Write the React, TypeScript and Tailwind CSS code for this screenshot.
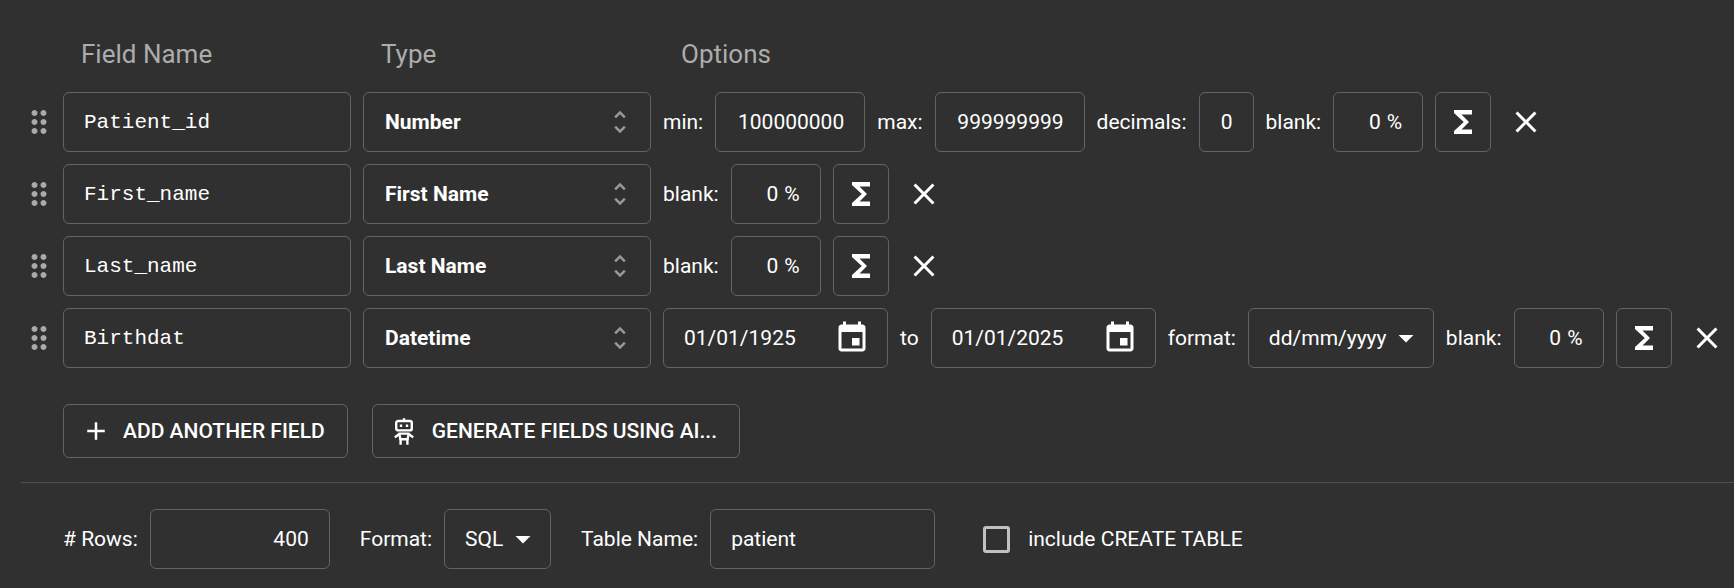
import { useId, useState } from 'react';
import type { ReactNode } from 'react';

const BOX = 'h-15 shrink-0 rounded-md border border-[#636363]';

function Icon({ d, className }: { d: string; className: string }) {
  return (
    <svg viewBox="0 0 24 24" fill="currentColor" aria-hidden="true" className={className}>
      <path d={d} />
    </svg>
  );
}

const PATHS = {
  drag: 'M11 18c0 1.1-.9 2-2 2s-2-.9-2-2 .9-2 2-2 2 .9 2 2m-2-8c-1.1 0-2 .9-2 2s.9 2 2 2 2-.9 2-2-.9-2-2-2m0-6c-1.1 0-2 .9-2 2s.9 2 2 2 2-.9 2-2-.9-2-2-2m6 4c1.1 0 2-.9 2-2s-.9-2-2-2-2 .9-2 2 .9 2 2 2m0 2c-1.1 0-2 .9-2 2s.9 2 2 2 2-.9 2-2-.9-2-2-2m0 6c-1.1 0-2 .9-2 2s.9 2 2 2 2-.9 2-2-.9-2-2-2',
  unfold: 'M12 5.83 15.17 9l1.41-1.41L12 3 7.41 7.59 8.83 9zm0 12.34L8.83 15l-1.41 1.41L12 21l4.59-4.59L15.17 15z',
  sigma: 'M18 4H6v2l6.5 6L6 18v2h12v-3h-7l5-5-5-5h7z',
  close: 'M19 6.41 17.59 5 12 10.59 6.41 5 5 6.41 10.59 12 5 17.59 6.41 19 12 13.41 17.59 19 19 17.59 13.41 12z',
  calendar: 'M17 12h-5v5h5zM16 1v2H8V1H6v2H5c-1.11 0-1.99.9-1.99 2L3 19c0 1.1.89 2 2 2h14c1.1 0 2-.9 2-2V5c0-1.1-.9-2-2-2h-1V1zm3 18H5V8h14z',
  caret: 'm7 10 5 5 5-5z',
  plus: 'M19 13h-6v6h-2v-6H5v-2h6V5h2v6h6z',
};

function RobotIcon() {
  return (
    <svg viewBox="0 0 20 27" fill="none" stroke="currentColor" strokeWidth="2.4" strokeLinejoin="round" aria-hidden="true" className="h-[27px] w-5">
      <path d="M10 .2v2.8" />
      <rect x="2.2" y="3" width="15.6" height="9.4" rx="2" />
      <path d="M5.8 7.7h2.4M11.8 7.7h2.4" strokeWidth="2.6" />
      <path d="M.8 19.4 5.2 16M19.2 19.4 14.8 16" />
      <path d="M5.2 15.6h9.6l-1.2 5.6H6.4z" />
      <path d="M6.6 20.6V26.8M13.4 20.6V26.8" />
    </svg>
  );
}

function Labelled({ label, children }: { label: string; children: (id: string) => ReactNode }) {
  const id = useId();
  return (
    <div className="flex shrink-0 items-center gap-3">
      <label htmlFor={id}>{label}</label>
      {children(id)}
    </div>
  );
}

function TextBox({ label, value, className }: { label: string; value: string; className: string }) {
  return (
    <Labelled label={label}>
      {(id) => <input id={id} type="text" defaultValue={value} className={`${BOX} px-5 outline-none ${className}`} />}
    </Labelled>
  );
}

function SelectBox({ label, options, className }: { label: string; options: string[]; className: string }) {
  return (
    <Labelled label={label}>
      {(id) => (
        <div className="relative flex items-center">
          <select id={id} className={`${BOX} appearance-none bg-[#303030] pl-5 outline-none ${className}`}>
            {options.map((o) => (
              <option key={o}>{o}</option>
            ))}
          </select>
          <Icon d={PATHS.caret} className="pointer-events-none absolute right-2.5 size-9" />
        </div>
      )}
    </Labelled>
  );
}

function DateBox({ name, value }: { name: string; value: string }) {
  return (
    <div className={`${BOX} flex w-[225px] items-center justify-between pr-[17px] pl-5`}>
      <input type="text" aria-label={name} defaultValue={value} className="w-32 outline-none" />
      <button type="button" aria-label={`Choose ${name}`}>
        <Icon d={PATHS.calendar} className="size-9" />
      </button>
    </div>
  );
}

function RowTail() {
  return (
    <>
      <Labelled label="blank:">
        {(id) => (
          <div className={`${BOX} flex w-[90px] items-center gap-1.5 px-5`}>
            <input id={id} type="text" defaultValue="0" className="w-full min-w-0 text-right outline-none" />
            <span>%</span>
          </div>
        )}
      </Labelled>
      <button type="button" aria-label="Formula" className={`${BOX} flex w-14 items-center justify-center`}>
        <Icon d={PATHS.sigma} className="size-9" />
      </button>
      <button type="button" aria-label="Remove field" className="flex w-[46px] shrink-0 items-center justify-center">
        <Icon d={PATHS.close} className="size-9" />
      </button>
    </>
  );
}

function FieldRow({ name, type, children }: { name: string; type: string; children?: ReactNode }) {
  return (
    <li className="flex items-center">
      <button type="button" aria-label="Reorder field" className="mr-1.5 shrink-0 cursor-grab text-[#aaaaaa]">
        <Icon d={PATHS.drag} className="size-9" />
      </button>
      <div className="flex items-center gap-3">
        <input
          type="text"
          aria-label="Field name"
          defaultValue={name}
          className={`${BOX} w-72 px-5 font-['Courier_New','Liberation_Mono',monospace] outline-none`}
        />
        <button type="button" aria-haspopup="dialog" className={`${BOX} flex w-72 items-center justify-between pr-[15px] pl-[21px] font-bold`}>
          {type}
          <Icon d={PATHS.unfold} className="size-[30px] text-[#999999]" />
        </button>
        {children}
        <RowTail />
      </div>
    </li>
  );
}

export default function App() {
  const [create, setCreate] = useState(false);
  return (
    <main className="min-h-screen bg-[#303030] pt-9 pb-5 pl-[21px] font-[Roboto,sans-serif] text-[21px] leading-8 whitespace-nowrap text-white">
      <div className="ml-[42px] flex gap-3 text-[26px] leading-9 text-[#acacac]">
        <h2 className="w-72 pl-4.5">Field Name</h2>
        <h2 className="w-72 pl-4.5">Type</h2>
        <h2 className="pl-4.5">Options</h2>
      </div>
      <ul className="mt-5 flex flex-col gap-3">
        <FieldRow name="Patient_id" type="Number">
          <TextBox label="min:" value="100000000" className="w-[150px] text-right" />
          <TextBox label="max:" value="999999999" className="w-[150px] text-right" />
          <TextBox label="decimals:" value="0" className="w-[55px] text-right" />
        </FieldRow>
        <FieldRow name="First_name" type="First Name" />
        <FieldRow name="Last_name" type="Last Name" />
        <FieldRow name="Birthdat" type="Datetime">
          <DateBox name="start date" value="01/01/1925" />
          <span>to</span>
          <DateBox name="end date" value="01/01/2025" />
          <SelectBox label="format:" options={['dd/mm/yyyy']} className="w-[186px]" />
        </FieldRow>
      </ul>
      <div className="mt-9 ml-[42px] flex gap-6 font-medium">
        <button type="button" className="flex h-[54px] items-center gap-3 rounded-md border border-[#636363] pr-[22px] pl-[17px]">
          <Icon d={PATHS.plus} className="size-[30px]" />
          ADD ANOTHER FIELD
        </button>
        <button type="button" className="flex h-[54px] items-center gap-4.5 rounded-md border border-[#636363] pr-[22px] pl-[21px]">
          <RobotIcon />
          GENERATE FIELDS USING AI...
        </button>
      </div>
      <hr className="mt-6 border-[#4f4f4f]" />
      <div className="mt-[26px] ml-[42px] flex items-center gap-[30px]">
        <TextBox label="# Rows:" value="400" className="w-45 text-right" />
        <SelectBox label="Format:" options={['SQL']} className="w-[107px]" />
        <TextBox label="Table Name:" value="patient" className="w-[225px]" />
        <label className="ml-[18px] flex items-center gap-4.5">
          <input
            type="checkbox"
            checked={create}
            onChange={(e) => setCreate(e.target.checked)}
            className="size-[27px] appearance-none rounded-[3px] border-3 border-[#c1c1c1] checked:bg-[#c1c1c1]"
          />
          include CREATE TABLE
        </label>
      </div>
    </main>
  );
}
